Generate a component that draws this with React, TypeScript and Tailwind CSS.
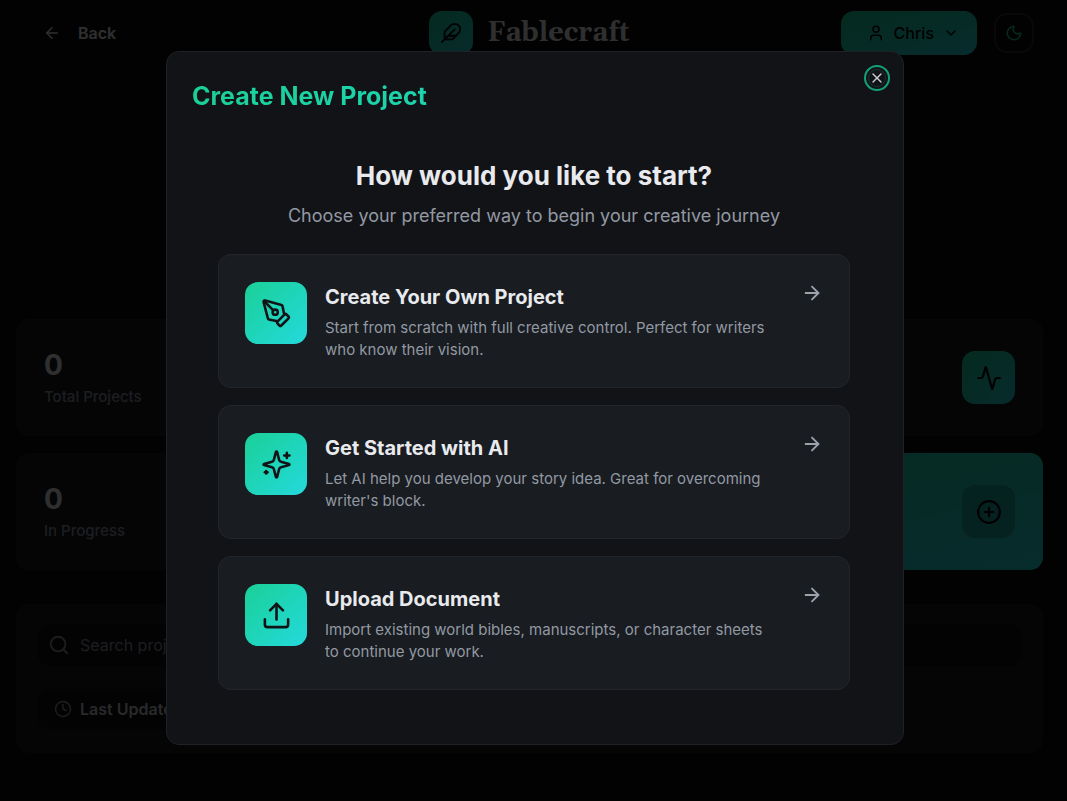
import type { ComponentType, ReactNode } from "react";
import {
  Activity,
  ArrowLeft,
  ArrowRight,
  ChevronDown,
  CirclePlus,
  Clock,
  Feather,
  Moon,
  PenTool,
  Search,
  Upload,
  User,
  X,
} from "lucide-react";

type Icon = ComponentType<{ className?: string }>;

function Sparkles({ className }: { className?: string }) {
  return (
    <svg
      viewBox="0 0 24 24"
      fill="none"
      stroke="currentColor"
      strokeWidth="2"
      strokeLinecap="round"
      strokeLinejoin="round"
      aria-hidden="true"
      className={className}
    >
      <path d="M9.937 15.5A2 2 0 0 0 8.5 14.063l-6.135-1.582a.5.5 0 0 1 0-.962L8.5 9.936A2 2 0 0 0 9.937 8.5l1.582-6.135a.5.5 0 0 1 .963 0L14.063 8.5A2 2 0 0 0 15.5 9.937l6.135 1.581a.5.5 0 0 1 0 .964L15.5 14.063a2 2 0 0 0-1.437 1.437l-1.582 6.135a.5.5 0 0 1-.963 0z" />
      <path d="M20 3v4" />
      <path d="M22 5h-4" />
      <path d="M4 17v2" />
      <path d="M5 18H3" />
    </svg>
  );
}

const options: { icon: Icon; title: string; text: string }[] = [
  {
    icon: PenTool,
    title: "Create Your Own Project",
    text: "Start from scratch with full creative control. Perfect for writers who know their vision.",
  },
  {
    icon: Sparkles,
    title: "Get Started with AI",
    text: "Let AI help you develop your story idea. Great for overcoming writer's block.",
  },
  {
    icon: Upload,
    title: "Upload Document",
    text: "Import existing world bibles, manuscripts, or character sheets to continue your work.",
  },
];

function Header() {
  return (
    <header className="grid grid-cols-[1fr_auto_1fr] items-center pt-[11px] pr-[33px] pl-[25px]">
      <button className="flex items-center gap-[17px] justify-self-start px-[18px] text-base font-semibold">
        <ArrowLeft className="size-[18px]" />
        Back
      </button>
      <div className="flex items-center gap-[14px]">
        <span className="flex size-11 items-center justify-center rounded-[13px] bg-linear-to-br from-[#1bd096] to-[#25d9dc] text-black">
          <Feather className="size-[22px]" />
        </span>
        <span className="font-[Gelasio,Georgia,serif] text-[27px] leading-10 font-bold">Fablecraft</span>
      </div>
      <div className="flex items-center gap-[17px] justify-self-end">
        <button className="flex h-11 items-center gap-[9px] rounded-[13px] bg-linear-to-br from-[#1bd096] to-[#25d9dc] pr-[18px] pl-[26px] text-base font-medium text-black">
          <User className="size-[18px]" />
          Chris
          <ChevronDown className="size-4" />
        </button>
        <button
          aria-label="Toggle theme"
          className="flex size-10 items-center justify-center rounded-[13px] border-2 border-[#2a2c33] text-[#1bd096]"
        >
          <Moon className="size-[18px]" />
        </button>
      </div>
    </header>
  );
}

function StatCard({ value, label, icon, accent = false }: { value?: string; label?: string; icon?: ReactNode; accent?: boolean }) {
  const tone = accent ? "border-transparent bg-linear-to-br from-[#1bd096] to-[#25d9dc]" : "border-[#202128] bg-[#1a1b21]";
  return (
    <section className={"flex h-[117px] items-center justify-between rounded-[13px] border px-[27px] " + tone}>
      <div className="pt-0.5">
        {value && <p className="text-[28px] leading-9 font-bold">{value}</p>}
        {label && <p className="text-[15px] leading-7 font-medium text-[#8b93a0]">{label}</p>}
      </div>
      {icon}
    </section>
  );
}

function Dashboard() {
  return (
    <div className="min-h-screen bg-[#0b0b0c]">
      <Header />
      <main className="flex flex-col gap-[34px] pt-[264px] pr-6 pl-4">
        <div className="grid grid-cols-2 gap-[17px]">
          <StatCard value="0" label="Total Projects" />
          <StatCard
            icon={
              <span className="flex size-[53px] items-center justify-center rounded-[13px] bg-linear-to-br from-[#1bd096] to-[#25d9dc] text-black">
                <Activity className="size-[26px]" />
              </span>
            }
          />
          <StatCard value="0" label="In Progress" />
          <StatCard
            accent
            icon={
              <span className="flex size-[53px] items-center justify-center rounded-[13px] bg-black/20 text-black">
                <CirclePlus className="size-[26px]" />
              </span>
            }
          />
        </div>
        <section className="flex flex-col items-start gap-[23px] rounded-[13px] bg-[#1a1b21] px-[21px] pt-5 pb-6">
          <label className="flex h-[42px] w-full items-center gap-[10px] rounded-[13px] bg-[#101012] pl-[11px] text-[#8b93a0]">
            <Search className="size-[22px]" />
            <input
              aria-label="Search projects"
              placeholder="Search projects..."
              className="min-w-0 grow bg-transparent text-base outline-none placeholder:text-[#8b93a0]"
            />
          </label>
          <button className="flex h-10 items-center gap-2 rounded-[13px] bg-[#101012] px-[17px] text-base font-semibold text-[#c9cdd3]">
            <Clock className="size-[18px] text-[#8b93a0]" />
            Last Updated
          </button>
        </section>
      </main>
    </div>
  );
}

function OptionCard({ icon: Icon, title, text }: { icon: Icon; title: string; text: string }) {
  return (
    <button className="flex w-full items-start rounded-[13px] border border-[#22262b] bg-[#191c21] px-[26px] pt-[27px] pb-[26px] text-left">
      <span className="flex size-[62px] shrink-0 items-center justify-center rounded-[13px] bg-linear-to-br from-[#1bd096] to-[#25d9dc] text-[#121317]">
        <Icon className="size-[31px]" />
      </span>
      <span className="ml-[18px] flex min-w-0 grow flex-col gap-[5px]">
        <span className="text-xl leading-[30px] font-bold text-[#e8eaed]">{title}</span>
        <span className="text-[15px] leading-[22px] text-[#9299a3]">{text}</span>
      </span>
      <ArrowRight className="ml-[26px] size-[22px] shrink-0 text-[#9ca3ad]" />
    </button>
  );
}

function CreateProjectDialog() {
  return (
    <div className="fixed inset-0 flex items-center justify-center bg-black/80 pb-[5px] pl-[3px]">
      <div
        role="dialog"
        aria-modal="true"
        aria-labelledby="dialog-title"
        className="relative w-full max-w-[738px] rounded-[13px] border border-[#1e2126] bg-[#121317] pt-[26px] pr-[27px] pb-[54px] pl-[25px]"
      >
        <h2
          id="dialog-title"
          className="bg-linear-to-r from-[#1bd096] to-[#25d9dc] bg-clip-text text-[25px] leading-9 font-bold text-transparent"
        >
          Create New Project
        </h2>
        <button
          aria-label="Close"
          className="absolute top-[13px] right-[13px] flex size-[26px] items-center justify-center rounded-full border-2 border-[#14a077] text-[#c9ccd0]"
        >
          <span className="flex size-[18px] items-center justify-center rounded-full border border-[#14352f]">
            <X className="size-4 shrink-0" />
          </span>
        </button>
        <div className="px-[26px] pt-[42px]">
          <div className="text-center">
            <h3 className="text-[26px] leading-10 font-bold text-[#e8eaed]">How would you like to start?</h3>
            <p className="mt-1 text-[18px] leading-8 text-[#9299a3]">Choose your preferred way to begin your creative journey</p>
          </div>
          <div className="mt-[22px] flex flex-col gap-[17px]">
            {options.map((option) => (
              <OptionCard key={option.title} {...option} />
            ))}
          </div>
        </div>
      </div>
    </div>
  );
}

export default function App() {
  return (
    <div className="font-[Inter,sans-serif] text-[#e8eaed]">
      <Dashboard />
      <CreateProjectDialog />
    </div>
  );
}
